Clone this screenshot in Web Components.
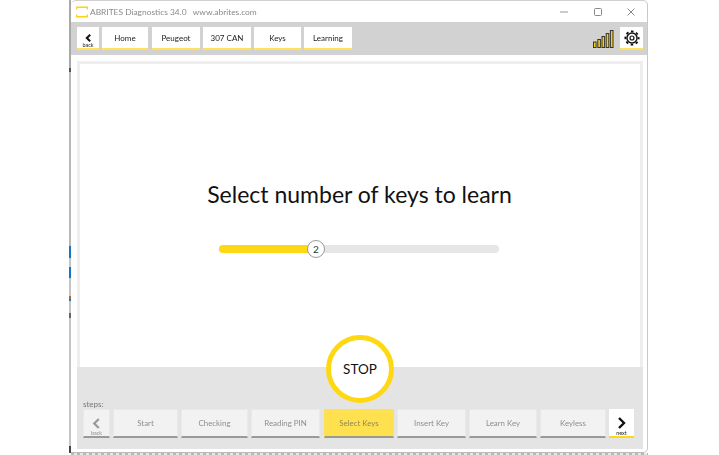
<!DOCTYPE html>
<html>
<head>
<meta charset="utf-8">
<style>
  html, body { margin: 0; padding: 0; background: #fff; }
  body { font-family: Lato, "Open Sans", sans-serif; overflow: hidden; }
</style>
</head>
<body>
<abr-window>
  <abr-titlebar slot="title">ABRITES Diagnostics 34.0&nbsp;&nbsp; www.abrites.com</abr-titlebar>
  <abr-toolbar slot="toolbar">
    <abr-crumb back>back</abr-crumb>
    <abr-crumb style="width:46px">Home</abr-crumb>
    <abr-crumb style="width:48px;margin-left:1px">Peugeot</abr-crumb>
    <abr-crumb style="width:48px">307 CAN</abr-crumb>
    <abr-crumb style="width:47px">Keys</abr-crumb>
    <abr-crumb style="width:48px">Learning</abr-crumb>
  </abr-toolbar>
  <abr-main slot="main">
    <abr-slider value="2"></abr-slider>
  </abr-main>
  <abr-footer slot="footer">
    <abr-step nav="back" style="width:27px">back</abr-step>
    <abr-step style="width:65px">Start</abr-step>
    <abr-step style="width:67px">Checking</abr-step>
    <abr-step style="width:69px">Reading PIN</abr-step>
    <abr-step active style="width:70px;margin-left:1px">Select Keys</abr-step>
    <abr-step style="width:69px">Insert Key</abr-step>
    <abr-step style="width:68px">Learn Key</abr-step>
    <abr-step style="width:66px">Keyless</abr-step>
    <abr-step nav="next" style="width:25px">next</abr-step>
  </abr-footer>
</abr-window>

<script>
class AbrWindow extends HTMLElement {
  constructor() {
    super();
    const shadowRoot = this.attachShadow({ mode: 'open' });
    shadowRoot.innerHTML = `
    <style>
      :host { display: flex; width: 719px; height: 455px; padding-left: 69px; box-sizing: border-box; }
      .edge {
        width: 2px;
        background: linear-gradient(#a8a8a8 0 68px, #555 68px 72px, #b8b8b8 72px 246px, #1b74c0 246px 258px,
          #c4c4c4 258px 267px, #1b74c0 267px 278px, #c4c4c4 278px 296px, #a07040 296px 299px, #1b74c0 299px 301px,
          #c4c4c4 301px 313px, #666 313px 318px, #c4c4c4 318px 446px, #444 446px 453px, transparent 453px);
      }
      .col { width: 577px; display: flex; flex-direction: column; }
      .win {
        height: 453px;
        background: #fff;
        border-right: 1px solid #c8c8c8;
        border-bottom: 1px solid #bbb;
        border-top: 1px solid #d0d0d0;
        border-radius: 5px 5px 5px 0;
        box-sizing: border-box;
        display: flex;
        flex-direction: column;
        overflow: hidden;
      }
      .body { padding: 6px 4px 0 6px; display: flex; flex-direction: column; }
      .floor { height: 2px; background: repeating-linear-gradient(90deg, #999 0 3px, #ddd 3px 6px); opacity: .7; }
    </style>
    <div class="edge"></div>
    <div class="col">
      <div class="win">
        <slot name="title"></slot>
        <slot name="toolbar"></slot>
        <div class="body">
          <slot name="main"></slot>
          <slot name="footer"></slot>
        </div>
      </div>
      <div class="floor"></div>
    </div>
    `;
  }
}

class AbrTitlebar extends HTMLElement {
  constructor() {
    super();
    const shadowRoot = this.attachShadow({ mode: 'open' });
    shadowRoot.innerHTML = `
    <style>
      :host { display: flex; align-items: center; height: 21px; flex: none; padding-left: 5px; color: #8a8a8a; font-size: 8.4px; }
      .logo { width: 12px; height: 12px; margin-right: 2px; flex: none; }
      .text { flex: 1; white-space: pre; filter: blur(.25px); }
      .ctl { display: flex; align-items: center; }
      .ctl svg { display: block; }
    </style>
    <svg class="logo" viewBox="0 0 12 12" fill="none" stroke="#ffd21a" stroke-width="1.4">
      <path d="M.7 3.6V1.2H11.3V3.6M.7 8.4V10.8H11.3V8.4"/>
    </svg>
    <span class="text"><slot></slot></span>
    <div class="ctl">
      <svg width="10" height="10" viewBox="0 0 10 10" style="margin-right:24px"><path d="M1 5H9" stroke="#999" stroke-width="1"/></svg>
      <svg width="10" height="10" viewBox="0 0 10 10" style="margin-right:23px"><rect x="1.5" y="1.5" width="7" height="7" rx="1" fill="none" stroke="#888"/></svg>
      <svg width="10" height="10" viewBox="0 0 10 10" style="margin-right:11px"><path d="M1.5 1.5L8.5 8.5M8.5 1.5L1.5 8.5" stroke="#888" stroke-width="1"/></svg>
    </div>
    `;
  }
}

class AbrToolbar extends HTMLElement {
  constructor() {
    super();
    const shadowRoot = this.attachShadow({ mode: 'open' });
    shadowRoot.innerHTML = `
    <style>
      :host { display: flex; height: 33px; flex: none; align-items: center; box-sizing: border-box; padding: 0 4px 0 6px; background: #d2d2d2; }
      .crumbs { display: flex; gap: 3px; }
      .right { margin-left: auto; display: flex; align-items: center; gap: 6px; }
      .signal { display: block; }
      .gear { width: 23px; height: 23px; background: #fff; box-sizing: border-box; border-bottom: 2px solid #ffe15a; display: flex; align-items: center; justify-content: center; }
    </style>
    <div class="crumbs"><slot></slot></div>
    <div class="right">
      <svg class="signal" width="22" height="20" viewBox="0 0 22 20">
        <g fill="#f5cf12" stroke="#333" stroke-width="1">
          <rect x="1.5" y="13" width="2.6" height="5.5"/>
          <rect x="5.8" y="10.5" width="2.6" height="8"/>
          <rect x="10" y="7.5" width="2.6" height="11"/>
          <rect x="14.2" y="4.5" width="2.6" height="14"/>
          <rect x="18.4" y="1.5" width="2.6" height="17"/>
        </g>
      </svg>
      <div class="gear">
        <svg width="16" height="16" viewBox="0 0 24 24" fill="none" stroke="#111">
          <circle cx="12" cy="12" r="10" stroke-width="2.6" stroke-dasharray="3.93 3.93" stroke-dashoffset="1.96"/>
          <circle cx="12" cy="12" r="7.6" stroke-width="2.2"/>
          <circle cx="12" cy="12" r="3" stroke-width="1.8"/>
        </svg>
      </div>
    </div>
    `;
  }
}

class AbrCrumb extends HTMLElement {
  constructor() {
    super();
    const back = this.hasAttribute('back');
    const shadowRoot = this.attachShadow({ mode: 'open' });
    shadowRoot.innerHTML = `
    <style>
      :host { display: flex; height: 23px; box-sizing: border-box; background: #fff; border-bottom: 2px solid #ffe15a; color: #222; font-size: 8px; align-items: center; justify-content: center; }
      :host([back]) { width: 22px; flex-direction: column; justify-content: flex-start; }
      .arrow { margin-top: 7px; display: block; }
      .sub { font-size: 5.5px; line-height: 6px; margin-top: 0; }
      .t { filter: blur(.25px); }
    </style>
    ${back ? `
      <svg class="arrow" width="7" height="8" viewBox="0 0 7 8"><path d="M5.2 .8L1.8 4L5.2 7.2" fill="none" stroke="#111" stroke-width="2"/></svg>
      <span class="sub t"><slot></slot></span>` : `<span class="t"><slot></slot></span>`}
    `;
  }
}

class AbrMain extends HTMLElement {
  constructor() {
    super();
    const shadowRoot = this.attachShadow({ mode: 'open' });
    shadowRoot.innerHTML = `
    <style>
      :host { display: flex; flex-direction: column; align-items: center; height: 306px; box-sizing: border-box; border: 3px solid #eeeeee; border-bottom: 0; background: #fff; }
      h1 { margin: 115px 1px 0 0; font-size: 23px; line-height: 30px; font-weight: 400; color: #111; white-space: nowrap; }
      .slot { display: block; margin: 36px 2px 0 0; }
    </style>
    <h1>Select number of keys to learn</h1>
    <div class="slot"><slot></slot></div>
    `;
  }
}

class AbrSlider extends HTMLElement {
  constructor() {
    super();
    const shadowRoot = this.attachShadow({ mode: 'open' });
    shadowRoot.innerHTML = `
    <style>
      :host { display: block; position: relative; width: 280px; height: 8px; border-radius: 4px; background: #e6e6e6; }
      .fill { width: 97px; height: 100%; border-radius: 4px 0 0 4px; background: #ffd814; }
      .knob {
        position: absolute; left: 88px; top: -5px; width: 18px; height: 18px; box-sizing: border-box;
        border-radius: 50%; background: #fff; border: 1px solid #9a9a9a; color: #333; font-size: 10px;
        display: flex; align-items: center; justify-content: center;
      }
    </style>
    <div class="fill"></div>
    <div class="knob">${this.getAttribute('value')}</div>
    `;
  }
}

class AbrFooter extends HTMLElement {
  constructor() {
    super();
    const shadowRoot = this.attachShadow({ mode: 'open' });
    shadowRoot.innerHTML = `
    <style>
      :host { display: block; position: relative; height: 82px; box-sizing: border-box; padding: 32px 0 0 6px; background: #e4e4e4; }
      .label { font-size: 8px; line-height: 10px; color: #777; filter: blur(.25px); }
      .row { display: flex; gap: 3px; }
      .stop {
        position: absolute; left: 249px; top: -32px; width: 68px; height: 68px; box-sizing: border-box;
        border-radius: 50%; border: 5px solid #ffd814; background: #fff; color: #111; font-size: 13.5px;
        display: flex; align-items: center; justify-content: center;
      }
    </style>
    <div class="label">steps:</div>
    <div class="row"><slot></slot></div>
    <div class="stop">STOP</div>
    `;
  }
}

class AbrStep extends HTMLElement {
  constructor() {
    super();
    const nav = this.getAttribute('nav');
    const shadowRoot = this.attachShadow({ mode: 'open' });
    const arrow = nav === 'back'
      ? '<path d="M7 1L2 6L7 11" fill="none" stroke="#999" stroke-width="2.4"/>'
      : '<path d="M2 1L7 6L2 11" fill="none" stroke="#111" stroke-width="2.4"/>';
    shadowRoot.innerHTML = `
    <style>
      :host {
        display: flex; height: 29px; box-sizing: border-box; flex: none;
        background: #f2f2f2; border: 1px solid #e9e9e9; border-bottom: 2px solid #999;
        color: #8e8e8e; font-size: 7.9px; align-items: center; justify-content: center;
      }
      :host([active]) { background: #ffe04f; border-color: #ffe04f; border-bottom-color: #9a9a8a; color: #8f8a55; }
      :host([nav]) { flex-direction: column; justify-content: flex-start; }
      :host([nav="next"]) { background: #fff; border: 0; border-bottom: 2px solid #ffd814; color: #222; }
      svg { display: block; margin-top: 8px; }
      .sub { font-size: 5.5px; line-height: 6px; margin-top: 1px; }
      .t { filter: blur(.25px); }
    </style>
    ${nav ? `<svg width="9" height="12" viewBox="0 0 9 12">${arrow}</svg><span class="sub t"><slot></slot></span>` : `<span class="t"><slot></slot></span>`}
    `;
  }
}

customElements.define('abr-window', AbrWindow);
customElements.define('abr-titlebar', AbrTitlebar);
customElements.define('abr-toolbar', AbrToolbar);
customElements.define('abr-crumb', AbrCrumb);
customElements.define('abr-main', AbrMain);
customElements.define('abr-slider', AbrSlider);
customElements.define('abr-footer', AbrFooter);
customElements.define('abr-step', AbrStep);
</script>
</body>
</html>
